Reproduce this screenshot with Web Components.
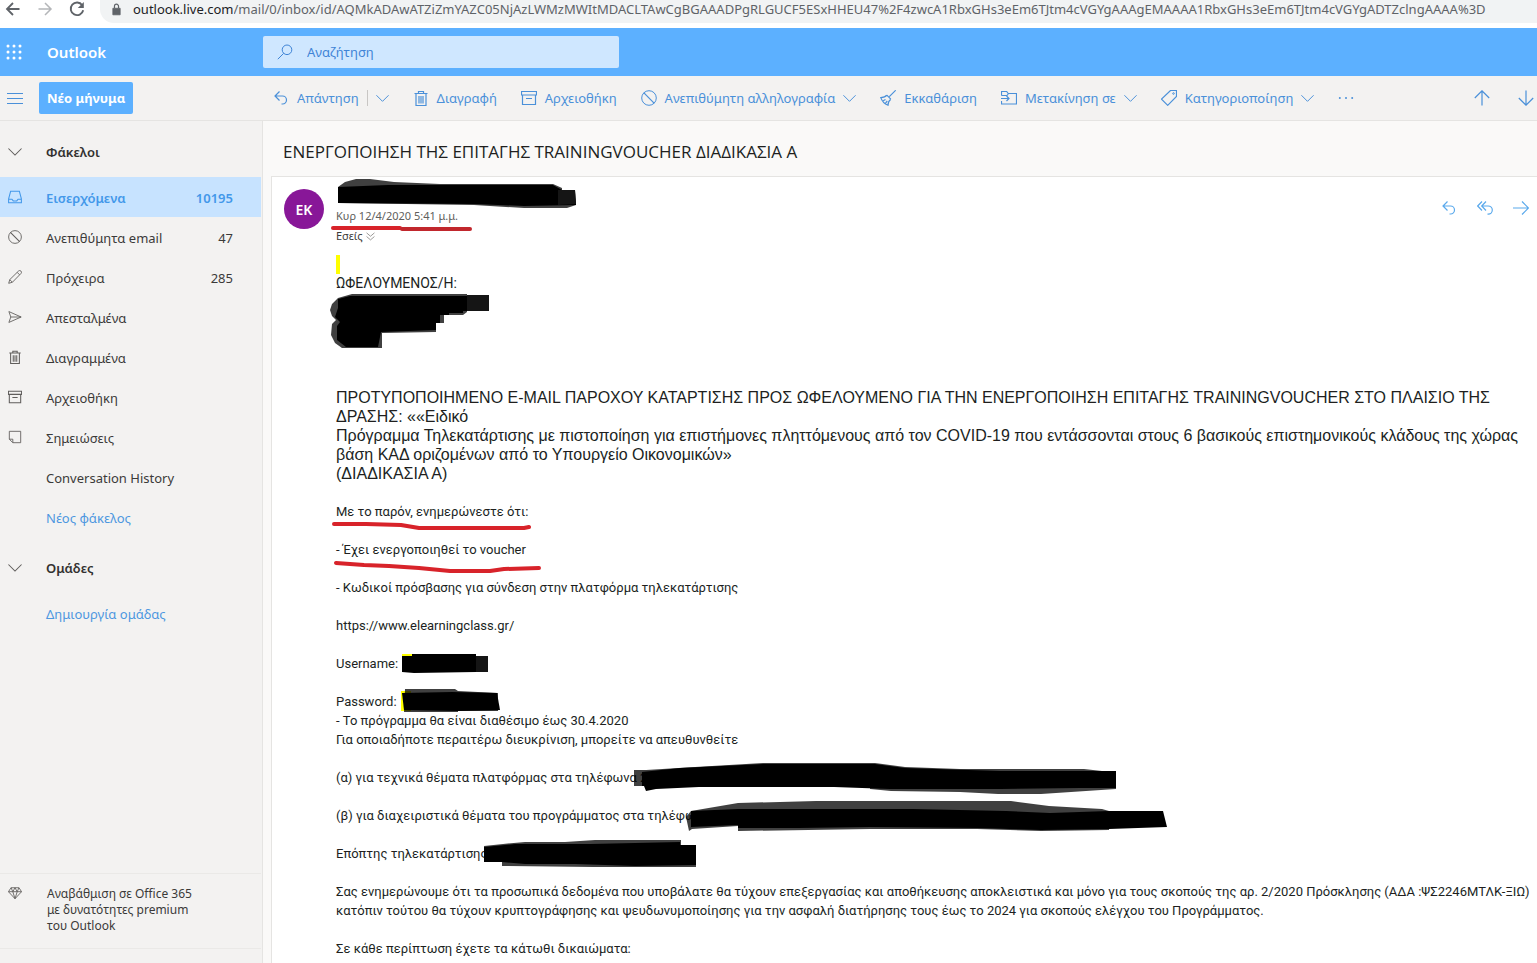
<!DOCTYPE html>
<html lang="el">
<head>
<meta charset="utf-8">
<title>Outlook</title>
<style>
    body {
        margin: 0;
        height: 100vh;
        overflow: hidden;
        font-family: "Noto Sans", "Open Sans", sans-serif;
        font-size: 13px;
        color: #3b3a39;
        --blue: #5cb0ff;
        --ink: #4a90d9;
        --line: #e5e4e2;
    }
</style>
</head>
<body>
<mail-app></mail-app>

<script>
const ICONS = {
    back: '<path d="M14.5 8H2M8 2L2 8l6 6" stroke-width="1.8"/>',
    forward: '<path d="M1.500 8H14M8 2l6 6-6 6" stroke-width="1.5"/>',
    reload: '<path d="M13.200 4.200A6.300 6.300 0 1 0 14.200 9.200" stroke-width="1.900"/><path d="M14.800 1v6H8.800z" fill="currentColor" stroke="none"/>',
    lock: '<path d="M3.500 6.500h9v8h-9z" fill="currentColor"/><path d="M5.500 6.500V4a2.500 2.500 0 0 1 5 0v2.500" stroke-width="1.500"/>',
    waffle: '<g fill="currentColor" stroke="none"><circle cx="2" cy="2" r="1.500"/><circle cx="8" cy="2" r="1.500"/><circle cx="14" cy="2" r="1.500"/><circle cx="2" cy="8" r="1.500"/><circle cx="8" cy="8" r="1.500"/><circle cx="14" cy="8" r="1.500"/><circle cx="2" cy="14" r="1.500"/><circle cx="8" cy="14" r="1.500"/><circle cx="14" cy="14" r="1.500"/></g>',
    search: '<circle cx="10" cy="5.800" r="4.800"/><path d="M6.700 9.300L.8 15.200"/>',
    menu: '<path d="M0 3.500h16M0 8.500h16M0 13.500h16"/>',
    reply: '<path d="M6.500 1.500L2 6l4.500 4.500M2 6h7.500a4 4 0 0 1 0 8H8.500" stroke-width="1.200"/>',
    replyAll: '<path d="M5 1.500L.7 6 5 10.500M9 1.500L4.700 6 9 10.500M4.700 6h6.500a4 4 0 0 1 0 8.200H10.500" stroke-width="1.200"/>',
    arrow: '<path d="M0 8h15.500M9 1.500L15.500 8 9 14.500" stroke-width="1.200"/>',
    up: '<path d="M8 15.500V.8M.8 8L8 .8 15.200 8" stroke-width="1.200"/>',
    down: '<path d="M8 .5v14.700M.8 8L8 15.200 15.200 8" stroke-width="1.200"/>',
    chevron: '<path d="M.5 4L8 11.500 15.500 4" stroke-width="1.200"/>',
    double: '<path d="M1 1.500l7 6 7-6M1 8l7 6 7-6" stroke-width="1.500"/>',
    trash: '<path d="M1.500 3.500h13M5.500 3.500v-2h5v2M3 3.500v12h10v-12M6 6v7.500M8 6v7.500M10 6v7.500" stroke-width="1.200"/>',
    archive: '<path d="M.5 1.500h15v3.500H.5zM1.500 5v9.500h13V5M5 8.500h6" stroke-width="1.200"/>',
    block: '<circle cx="8" cy="8" r="7.300"/><path d="M2.700 2.700l10.600 10.600" stroke-width="1.200"/>',
    sweep: '<path d="M15.700.3L9.300 6.700M6.800 5.200l4 4M6.800 5.200C5.500 7 3 7.600.8 7.600c1.200 3.600 3.700 6.300 7.200 7.600 0-2 .8-4.500 2.800-6M3.200 10.800l2.300-1.300M5.500 13.200l1.800-2.200" stroke-width="1.200"/>',
    move: '<path d="M.5 5.500v-4h5.200l1.500 2h8.300v10.500H.5v-3M.5 5.500h5.500l1.500-2M0 8.500h8M5.500 6L8 8.500 5.500 11" stroke-width="1.200"/>',
    tag: '<path d="M9.500.5h6v6L6.700 15.300.5 9.100z" stroke-width="1.200"/><circle cx="12.500" cy="3.500" r=".8"/>',
    dots: '<g fill="currentColor" stroke="none"><circle cx="1.800" cy="8" r="1"/><circle cx="8" cy="8" r="1"/><circle cx="14.200" cy="8" r="1"/></g>',
    inbox: '<path d="M3 1.500h10l2.300 8.500v4.500H.7V10zM.7 10.500h3.800l1.500 2h4l1.500-2h3.800" stroke-width="1.200"/>',
    pencil: '<path d="M.8 15.200L2 11 12 1.200a1.900 1.900 0 0 1 2.800 2.800L5 14zM10.500 2.700l2.800 2.800M2 11l3 3"/>',
    send: '<path d="M1 1.800L15 8 1 14.200 3.200 8zM3.200 8H15"/>',
    note: '<path d="M1.500 1.500h13v13H5.500l-4-4zM1.500 10.500h4v4"/>',
    diamond: '<path d="M3.500 2h9l3 4.500L8 14.500.5 6.500zM.5 6.500h15M3.500 2l2 4.500L8 2l2.500 4.500 2-4.500M5.500 6.500l2.500 8 2.500-8"/>'
};

class OlIcon extends HTMLElement
{
    constructor()
    {
        super();
        this.attachShadow({ mode: 'open' });
    }

    connectedCallback()
    {
        this.shadowRoot.innerHTML = `
      <style>
        :host {
            display: block;
            flex: none;
            width: 16px;
            height: 16px;
        }
        svg {
            display: block;
            width: 100%;
            height: 100%;
            fill: none;
            stroke: currentColor;
        }
      </style>
      <svg viewBox="0 0 16 16" aria-hidden="true">${ICONS[this.getAttribute('name')]}</svg>
    `;
    }
}

class BrowserBar extends HTMLElement
{
    constructor()
    {
        super();
        this.attachShadow({ mode: 'open' });
        this.shadowRoot.innerHTML = `
      <style>
        :host {
            display: flex;
            align-items: flex-start;
            height: 28px;
            background: #fff;
            color: #5f6368;
            overflow: hidden;
        }
        button {
            padding: 1px 0 0 5px;
            width: 32px;
            border: 0;
            background: none;
            color: inherit;
        }
        button.off { color: #b4b6b9; }
        .address {
            display: flex;
            flex: 1;
            align-items: center;
            height: 23px;
            margin-left: 4px;
            padding: 0 0 5px 10px;
            box-sizing: border-box;
            background: #f1f3f4;
            border-bottom-left-radius: 14px;
        }
        .address ol-icon { width: 13px; height: 13px; margin-right: 10px; }
        label { color: #202124; }
        input {
            flex: 1;
            min-width: 0;
            padding: 0;
            border: 0;
            outline: 0;
            background: none;
            color: #5f6368;
            font: inherit;
        }
      </style>
      <button aria-label="Πίσω"><ol-icon name="back"></ol-icon></button>
      <button class="off" aria-label="Εμπρός"><ol-icon name="forward"></ol-icon></button>
      <button aria-label="Ανανέωση"><ol-icon name="reload"></ol-icon></button>
      <div class="address">
        <ol-icon name="lock"></ol-icon>
        <label for="url">outlook.live.com</label>
        <input id="url" value="/mail/0/inbox/id/AQMkADAwATZiZmYAZC05NjAzLWMzMWItMDACLTAwCgBGAAADPgRLGUCF5ESxHHEU47%2F4zwcA1RbxGHs3eEm6TJtm4cVGYgAAAgEMAAAA1RbxGHs3eEm6TJtm4cVGYgADTZclngAAAA%3D">
      </div>
    `;
    }
}

class SuiteHeader extends HTMLElement
{
    constructor()
    {
        super();
        this.attachShadow({ mode: 'open' });
        this.shadowRoot.innerHTML = `
      <style>
        :host {
            display: flex;
            align-items: center;
            height: 48px;
            background: var(--blue);
            color: #fff;
        }
        button {
            padding: 0 0 0 6px;
            width: 47px;
            border: 0;
            background: none;
            color: inherit;
        }
        .brand {
            width: 216px;
            font-size: 15px;
            font-weight: 600;
        }
        form {
            display: flex;
            align-items: center;
            gap: 14px;
            width: 356px;
            height: 32px;
            padding: 0 14px;
            box-sizing: border-box;
            border-radius: 2px;
            background: #cfe7ff;
            color: #3f84d6;
        }
        input {
            flex: 1;
            min-width: 0;
            padding: 0;
            border: 0;
            outline: 0;
            background: none;
            color: inherit;
            font: inherit;
        }
        input::placeholder { color: inherit; opacity: 1; }
      </style>
      <button aria-label="Εφαρμογές"><ol-icon name="waffle"></ol-icon></button>
      <div class="brand">Outlook</div>
      <form>
        <ol-icon name="search"></ol-icon>
        <input aria-label="Αναζήτηση" placeholder="Αναζήτηση">
      </form>
    `;
    }
}

class CommandButton extends HTMLElement
{
    constructor()
    {
        super();
        this.attachShadow({ mode: 'open' });
    }

    connectedCallback()
    {
        const menu = this.hasAttribute('menu') ? '<ol-icon class="chevron" name="chevron"></ol-icon>' : '';
        const split = this.hasAttribute('split') ? '<i></i>' : '';

        this.shadowRoot.innerHTML = `
      <style>
        :host { display: block; flex: none; }
        button {
            display: flex;
            align-items: center;
            gap: 8px;
            height: 32px;
            padding: 0;
            border: 0;
            background: none;
            color: var(--ink);
            font: inherit;
            white-space: nowrap;
        }
        .chevron { width: 13px; height: 13px; }
        i { width: 1px; height: 16px; background: #c8c6c4; }
      </style>
      <button aria-label="${this.getAttribute('label')}">
        <ol-icon name="${this.getAttribute('icon')}"></ol-icon>
        <slot></slot>${split}${menu}
      </button>
    `;
    }
}

class CommandBar extends HTMLElement
{
    constructor()
    {
        super();
        this.attachShadow({ mode: 'open' });
        this.shadowRoot.innerHTML = `
      <style>
        :host {
            display: flex;
            align-items: center;
            height: 44px;
            border-bottom: 1px solid var(--line);
            background: #f3f2f1;
            overflow: hidden;
        }
        .left {
            display: flex;
            flex: none;
            align-items: center;
            gap: 16px;
            width: 273px;
            padding-left: 7px;
            box-sizing: border-box;
        }
        .new {
            height: 32px;
            padding: 0 8px;
            border: 0;
            border-radius: 2px;
            background: var(--blue);
            color: #fff;
            font: inherit;
            font-weight: 700;
            white-space: nowrap;
        }
        .actions { display: flex; flex: 1; gap: 24px; }
        .arrows { display: flex; gap: 28px; padding-right: 3px; }
      </style>
      <div class="left">
        <command-button icon="menu" label="Μενού"></command-button>
        <button class="new">Νέο μήνυμα</button>
      </div>
      <div class="actions">
        <command-button icon="reply" label="Απάντηση" split menu>Απάντηση</command-button>
        <command-button icon="trash" label="Διαγραφή">Διαγραφή</command-button>
        <command-button icon="archive" label="Αρχειοθήκη">Αρχειοθήκη</command-button>
        <command-button icon="block" label="Ανεπιθύμητη αλληλογραφία" menu>Ανεπιθύμητη αλληλογραφία</command-button>
        <command-button icon="sweep" label="Εκκαθάριση">Εκκαθάριση</command-button>
        <command-button icon="move" label="Μετακίνηση σε" menu>Μετακίνηση σε</command-button>
        <command-button icon="tag" label="Κατηγοριοποίηση" menu>Κατηγοριοποίηση</command-button>
        <command-button icon="dots" label="Περισσότερα"></command-button>
      </div>
      <div class="arrows">
        <command-button icon="up" label="Προηγούμενο"></command-button>
        <command-button icon="down" label="Επόμενο"></command-button>
      </div>
    `;
    }
}

class FolderItem extends HTMLElement
{
    constructor()
    {
        super();
        this.attachShadow({ mode: 'open' });
    }

    connectedCallback()
    {
        const icon = this.getAttribute('icon');

        this.shadowRoot.innerHTML = `
      <style>
        :host { display: block; }
        a {
            display: grid;
            grid-template-columns: 38px 1fr auto;
            align-items: center;
            height: 40px;
            padding: 2px 28px 0 8px;
            box-sizing: border-box;
            color: inherit;
            text-decoration: none;
            white-space: nowrap;
        }
        ol-icon { width: 14px; height: 14px; margin-top: -2px; color: #605e5c; }
        :host([selected]) a {
            background: #c7e3ff;
            color: #4398ea;
            font-weight: 600;
        }
        :host([selected]) ol-icon { color: inherit; }
        :host([action]) { color: #4d97e0; }
      </style>
      <a href="#">
        <span>${icon ? `<ol-icon name="${icon}"></ol-icon>` : ''}</span>
        <slot></slot>
        <span>${this.getAttribute('count') || ''}</span>
      </a>
    `;
    }
}

class FolderGroup extends HTMLElement
{
    constructor()
    {
        super();
        this.attachShadow({ mode: 'open' });
    }

    connectedCallback()
    {
        this.shadowRoot.innerHTML = `
      <style>
        :host { display: block; padding-top: 10px; }
        button {
            display: flex;
            align-items: center;
            gap: 24px;
            width: 100%;
            height: 40px;
            margin-bottom: 6px;
            padding: 2px 8px 0;
            border: 0;
            background: none;
            color: #323130;
            font: inherit;
            font-weight: 600;
        }
        ol-icon { width: 14px; height: 14px; color: #605e5c; }
      </style>
      <button><ol-icon name="chevron"></ol-icon>${this.getAttribute('label')}</button>
      <slot></slot>
    `;
    }
}

class FolderPane extends HTMLElement
{
    constructor()
    {
        super();
        this.attachShadow({ mode: 'open' });
        this.shadowRoot.innerHTML = `
      <style>
        :host {
            display: flex;
            flex-direction: column;
            box-sizing: border-box;
            padding-right: 1px;
            border-right: 1px solid var(--line);
            background: #f3f2f1;
        }
        nav { flex: 1; }
        .upgrade {
            display: grid;
            grid-template-columns: 39px 1fr;
            margin-bottom: 14px;
            padding: 12px 8px 14px;
            border: solid #eae9e7;
            border-width: 1px 0;
            color: inherit;
            font-size: 12px;
            line-height: 16px;
            text-decoration: none;
        }
        ol-icon { width: 14px; height: 14px; color: #605e5c; }
      </style>
      <nav>
        <folder-group label="Φάκελοι">
          <folder-item icon="inbox" count="10195" selected>Εισερχόμενα</folder-item>
          <folder-item icon="block" count="47">Ανεπιθύμητα email</folder-item>
          <folder-item icon="pencil" count="285">Πρόχειρα</folder-item>
          <folder-item icon="send">Απεσταλμένα</folder-item>
          <folder-item icon="trash">Διαγραμμένα</folder-item>
          <folder-item icon="archive">Αρχειοθήκη</folder-item>
          <folder-item icon="note">Σημειώσεις</folder-item>
          <folder-item>Conversation History</folder-item>
          <folder-item action>Νέος φάκελος</folder-item>
        </folder-group>
        <folder-group label="Ομάδες">
          <folder-item action>Δημιουργία ομάδας</folder-item>
        </folder-group>
      </nav>
      <a class="upgrade" href="#">
        <ol-icon name="diamond"></ol-icon>
        <span>Αναβάθμιση σε Office 365<br>με δυνατότητες premium<br>του Outlook</span>
      </a>
    `;
    }
}

class MailMessage extends HTMLElement
{
    constructor()
    {
        super();
        this.attachShadow({ mode: 'open' });
        this.shadowRoot.innerHTML = `
      <style>
        :host {
            display: grid;
            grid-template-columns: 40px 1fr;
            grid-template-rows: auto 1fr;
            column-gap: 12px;
            padding: 12px 0 0 12px;
            border: solid var(--line);
            border-width: 1px 0 0 1px;
            background: #fff;
            overflow: hidden;
        }
        .avatar {
            display: grid;
            place-items: center;
            height: 40px;
            border-radius: 50%;
            background: #881798;
            color: #fff;
            font-size: 14px;
            font-weight: 600;
        }
        header {
            display: flex;
            justify-content: space-between;
            min-width: 0;
            height: 66px;
        }
        .meta {
            padding-top: 17px;
            color: #605e5c;
            font-size: 11px;
            line-height: 20px;
        }
        .to { display: flex; align-items: center; gap: 3px; color: #3b3a39; }
        .to ol-icon { width: 9px; height: 9px; color: #8a8886; }
        .tools { display: flex; gap: 20px; padding: 3px 8px 0 0; --ink: #5aa9ec; }
        .body {
            grid-column: 2;
            min-width: 0;
            color: #201f1e;
            font-family: Roboto, "Liberation Sans", sans-serif;
            font-size: 13px;
            line-height: 19px;
            white-space: nowrap;
        }
      </style>
      <div class="avatar">EK</div>
      <header>
        <div class="meta">
          <div>Κυρ 12/4/2020 5:41 μ.μ.</div>
          <div class="to">Εσείς <ol-icon name="double"></ol-icon></div>
        </div>
        <div class="tools">
          <command-button icon="reply" label="Απάντηση"></command-button>
          <command-button icon="replyAll" label="Απάντηση σε όλους"></command-button>
          <command-button icon="arrow" label="Προώθηση"></command-button>
        </div>
      </header>
      <div class="body"><slot></slot></div>
    `;
    }
}

class MessageText extends HTMLElement
{
    constructor()
    {
        super();
        this.attachShadow({ mode: 'open' });
        this.shadowRoot.innerHTML = `
      <style>
        p { margin: 0 0 19px; }
        p.names { margin-bottom: 95px; font-size: 14px; }
        p.title { font-family: "Liberation Sans", Arial, sans-serif; font-size: 16px; }
        mark { display: block; width: 4px; height: 19px; background: #ff0; }
        a { color: inherit; text-decoration: none; }
      </style>
      <mark></mark>
      <p class="names">ΩΦΕΛΟΥΜΕΝΟΣ/Η:</p>
      <p class="title">ΠΡΟΤΥΠΟΠΟΙΗΜΕΝΟ E-MAIL ΠΑΡΟΧΟΥ ΚΑΤΑΡΤΙΣΗΣ ΠΡΟΣ ΩΦΕΛΟΥΜΕΝΟ ΓΙΑ ΤΗΝ ΕΝΕΡΓΟΠΟΙΗΣΗ ΕΠΙΤΑΓΗΣ TRAININGVOUCHER ΣΤΟ ΠΛΑΙΣΙΟ ΤΗΣ<br>ΔΡΑΣΗΣ: ««Ειδικό<br>Πρόγραμμα Τηλεκατάρτισης με πιστοποίηση για επιστήμονες πληττόμενους από τον COVID-19 που εντάσσονται στους 6 βασικούς επιστημονικούς κλάδους της χώρας<br>βάση ΚΑΔ οριζομένων από το Υπουργείο Οικονομικών»<br>(ΔΙΑΔΙΚΑΣΙΑ Α)</p>
      <p>Με το παρόν, ενημερώνεστε ότι:</p>
      <p>- Έχει ενεργοποιηθεί το voucher</p>
      <p>- Κωδικοί πρόσβασης για σύνδεση στην πλατφόρμα τηλεκατάρτισης</p>
      <p><a href="#">https://www.elearningclass.gr/</a></p>
      <p>Username:</p>
      <p>Password:<br>- Το πρόγραμμα θα είναι διαθέσιμο έως 30.4.2020<br>Για οποιαδήποτε περαιτέρω διευκρίνιση, μπορείτε να απευθυνθείτε</p>
      <p>(α) για τεχνικά θέματα πλατφόρμας στα τηλέφωνα 2</p>
      <p>(β) για διαχειριστικά θέματα του προγράμματος στα τηλέφων</p>
      <p>Επόπτης τηλεκατάρτισης</p>
      <p>Σας ενημερώνουμε ότι τα προσωπικά δεδομένα που υποβάλατε θα τύχουν επεξεργασίας και αποθήκευσης αποκλειστικά και μόνο για τους σκοπούς της αρ. 2/2020 Πρόσκλησης (ΑΔΑ :ΨΣ2246ΜΤΛΚ-ΞΙΩ)<br>κατόπιν τούτου θα τύχουν κρυπτογράφησης και ψευδωνυμοποίησης για την ασφαλή διατήρησης τους έως το 2024 για σκοπούς ελέγχου του Προγράμματος.</p>
      <p>Σε κάθε περίπτωση έχετε τα κάτωθι δικαιώματα:</p>
    `;
    }
}

// marker strokes drawn over the message: blacked-out details and red underlines
class InkLayer extends HTMLElement
{
    constructor()
    {
        super();
        this.attachShadow({ mode: 'open' });
        this.shadowRoot.innerHTML = `
      <style>
        :host {
            position: absolute;
            top: 0;
            left: 0;
            pointer-events: none;
        }
        svg { display: block; }
        .soft { fill: #000; fill-opacity: .75; }
        .mid { fill: #151515; }
        .red { fill: none; stroke: #d8232a; stroke-width: 4; stroke-linecap: round; stroke-linejoin: round; }
        .dark { stroke: #c1272d; }
      </style>
      <svg width="1200" height="880" aria-hidden="true">
        <path class="soft" d="M338 187L345 182 356 179H370L394 182 440 184H553L562 188V190H574L576 205 567 208H524L474 205 338 203z"/>
        <path d="M338 187L388 185 553 185 562 190H575L576 205 524 206 474 204 338 203z"/>
        <path class="mid" d="M558 190H575L576 204 558 205z"/>

        <path class="soft" d="M330 310L332 304 338 298 352 294H467V312L463 315H444V323H436V332L382 333V348H342L335 343 331 335 332 324 336 320 332 316z"/>
        <path d="M338 299L350 296H488V311H463V313H449V315H440V323H436V330L381 332 378 347H346L337 340V326L340 322 335 317 338 308z"/>
        <path class="mid" d="M467 295H489V311H467z"/>

        <path fill="#ff0" d="M402 654h12v4h-12zM401 691h10v20h-10z"/>
        <path d="M402 656h10v-2h64v18l-62 1-12-1z"/>
        <path class="mid" d="M476 656h12v16h-12z"/>
        <path class="soft" d="M405 689h50l3 2 40 2v18h-40v1h-54z"/>
        <path d="M402 693l50-1 45 1 3 17-42 1-54-1z"/>

        <path class="soft" d="M634 770H646L695 767 763 763H875L905 767 960 769H1084L1111 772H1116V789L1041 794H998L960 792 891 791 870 789V780H645V786H634z"/>
        <path d="M642 772L680 768 763 764H875L905 768 1000 771H1116V788H1080L1000 789H890L834 787H699L656 789 646 791 644 786H642z"/>

        <path class="soft" d="M686 817L691 811 738 803 816 801H1011L1049 806 1102 809 1109 811V830L1041 831 977 829H870L738 831V826L692 829 689 831z"/>
        <path d="M691 811L738 809H913L1006 811 1050 813 1109 811H1163L1167 827 1109 829 1041 830 977 828 870 827 799 828H738V825L691 827z"/>

        <path class="soft" d="M484 846L503 844 525 842H565L595 840H681V845L696 846V867L593 867 502 866V862L484 861z"/>
        <path d="M484 847L515 844H590L680 842V845H696V865L635 866 575 864 525 864 502 862H484z"/>

        <path class="red" d="M333 228h67"/>
        <path class="red dark" d="M402 229h68"/>
        <path class="red" d="M334 524l32 0 35 1 18 3h105l5-1"/>
        <path class="red" d="M336 563l28 2 25 1 30 2 31 3h40l14-2 35-1"/>
      </svg>
    `;
    }
}

class MailApp extends HTMLElement
{
    constructor()
    {
        super();
        this.attachShadow({ mode: 'open' });
        this.shadowRoot.innerHTML = `
      <style>
        :host {
            display: flex;
            flex-direction: column;
            height: 100%;
        }
        main {
            display: grid;
            grid-template-columns: 263px minmax(0, 1fr);
            flex: 1;
            min-height: 0;
        }
        section {
            display: flex;
            flex-direction: column;
            min-height: 0;
            padding-left: 8px;
            background: #faf9f8;
        }
        h1 {
            margin: 0;
            padding: 0 12px;
            color: #201f1e;
            font-family: "Open Sans", "Noto Sans", sans-serif;
            font-size: 17px;
            font-weight: 500;
            line-height: 62px;
            height: 55px;
            white-space: nowrap;
        }
        mail-message { flex: 1; min-height: 0; }
      </style>
      <browser-bar></browser-bar>
      <suite-header></suite-header>
      <command-bar></command-bar>
      <main>
        <folder-pane></folder-pane>
        <section>
          <h1>ΕΝΕΡΓΟΠΟΙΗΣΗ ΤΗΣ ΕΠΙΤΑΓΗΣ TRAININGVOUCHER ΔΙΑΔΙΚΑΣΙΑ Α</h1>
          <mail-message><message-text></message-text></mail-message>
        </section>
      </main>
      <ink-layer></ink-layer>
    `;
    }
}

window.customElements.define("ol-icon", OlIcon)
window.customElements.define("browser-bar", BrowserBar)
window.customElements.define("suite-header", SuiteHeader)
window.customElements.define("command-button", CommandButton)
window.customElements.define("command-bar", CommandBar)
window.customElements.define("folder-item", FolderItem)
window.customElements.define("folder-group", FolderGroup)
window.customElements.define("folder-pane", FolderPane)
window.customElements.define("mail-message", MailMessage)
window.customElements.define("message-text", MessageText)
window.customElements.define("ink-layer", InkLayer)
window.customElements.define("mail-app", MailApp)
</script>
</body>
</html>
